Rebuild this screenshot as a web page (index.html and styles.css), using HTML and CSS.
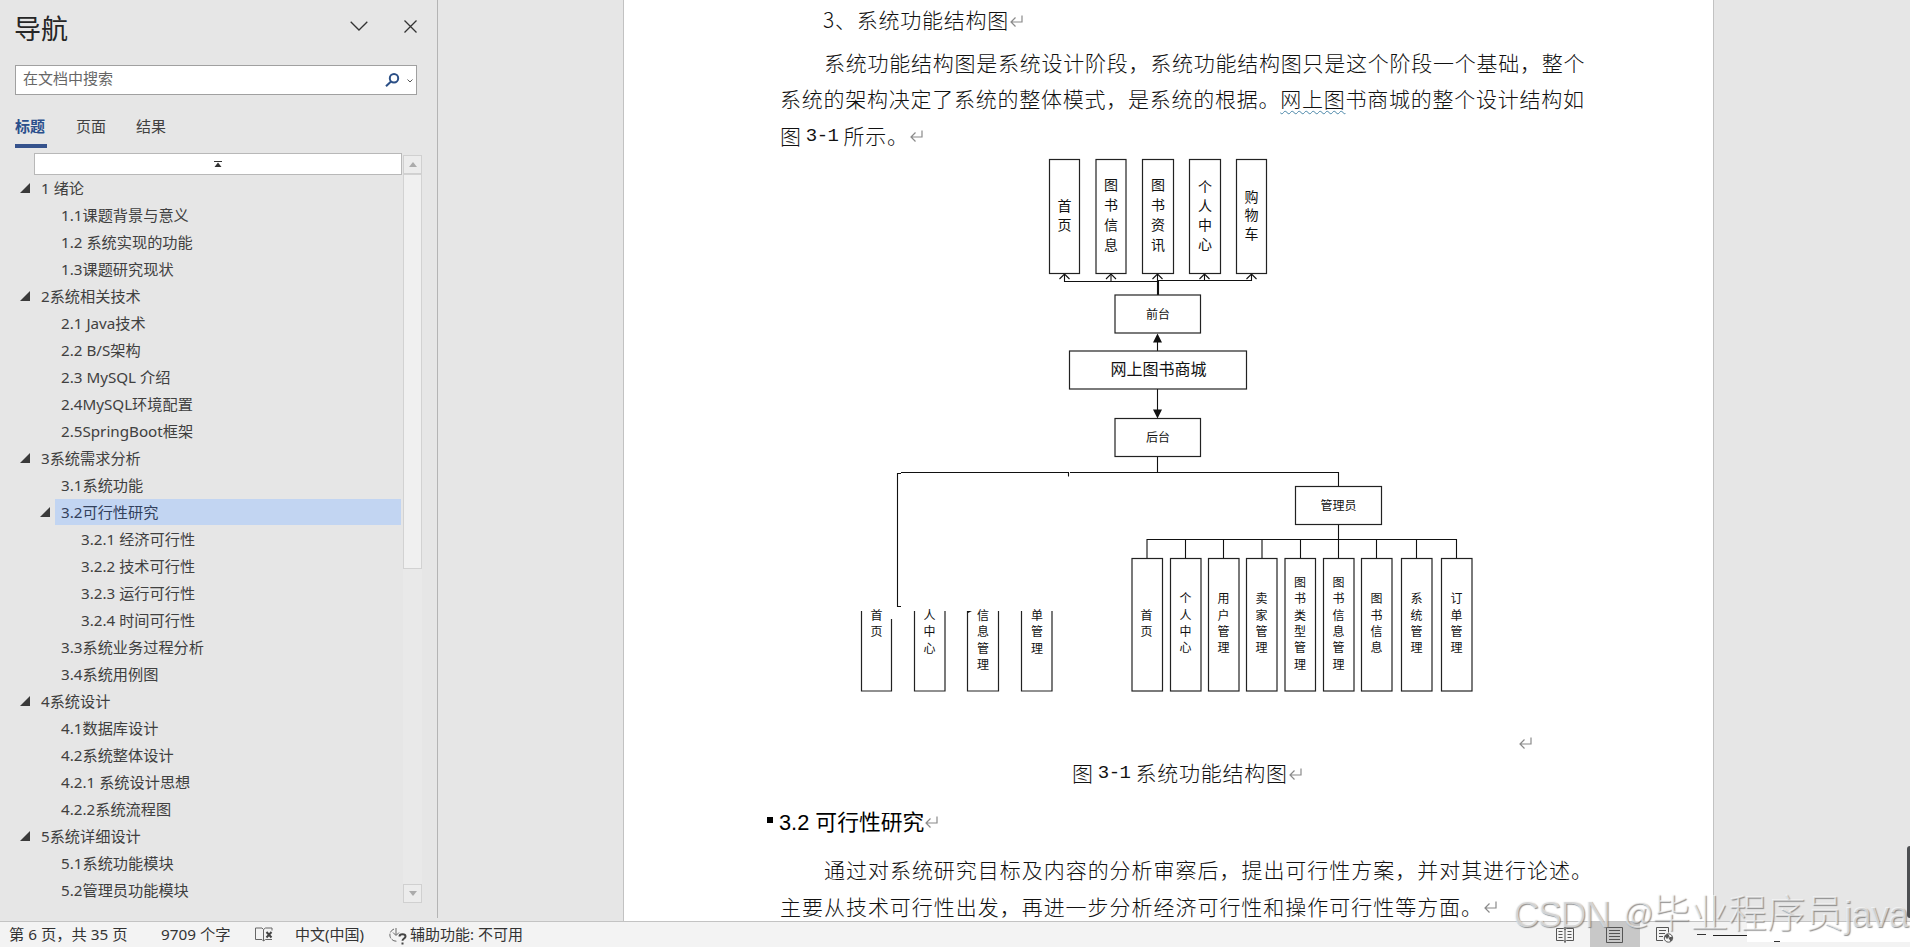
FILE: index.html
```html
<!DOCTYPE html>
<html lang="zh-CN">
<head>
  <meta charset="UTF-8">
  <title>导航</title>
  <link rel="stylesheet" href="styles.css">
</head>
<body>
  <svg class="defs">
    <symbol id="ret" viewBox="0 0 13 12">
      <path d="M12 0.5V7H1.5M5.5 2.5L1 7l4.5 4.5" fill="none" stroke="#8a8a8a" stroke-width="1.2"/>
    </symbol>
  </svg>

  <div class="main">
    <aside class="nav">
      <header class="nav-head">
        <h1>导航</h1>
        <svg class="ico-down" viewBox="0 0 18 10"><path d="M0.7 0.7L9 9l8.3-8.3"/></svg>
        <svg class="ico-close" viewBox="0 0 13 13"><path d="M0.5 0.5l12 12M12.5 0.5l-12 12"/></svg>
      </header>
      <div class="search">
        <span>在文档中搜索</span>
        <svg class="ico-search" viewBox="0 0 15 14"><circle cx="9" cy="5.3" r="4.2"/><path d="M6 8.5L1 13.3"/></svg>
        <svg class="ico-more" viewBox="0 0 6 4"><path d="M0.5 0.5L3 3l2.5-2.5"/></svg>
      </div>
      <div class="tabs">
        <span class="tab active">标题</span>
        <span class="tab">页面</span>
        <span class="tab">结果</span>
      </div>
      <div class="outline">
        <div class="tree">
          <div class="jump"><svg viewBox="0 0 8 6"><path d="M0 0h8v1H0zM4 1.5L7.5 6h-7z"/></svg></div>
          <div class="row l1 open">1 绪论</div>
          <div class="row l2">1.1课题背景与意义</div>
          <div class="row l2">1.2 系统实现的功能</div>
          <div class="row l2">1.3课题研究现状</div>
          <div class="row l1 open">2系统相关技术</div>
          <div class="row l2">2.1 Java技术</div>
          <div class="row l2">2.2 B/S架构</div>
          <div class="row l2">2.3 MySQL 介绍</div>
          <div class="row l2">2.4MySQL环境配置</div>
          <div class="row l2">2.5SpringBoot框架</div>
          <div class="row l1 open">3系统需求分析</div>
          <div class="row l2">3.1系统功能</div>
          <div class="row l2 open selected">3.2可行性研究</div>
          <div class="row l3">3.2.1 经济可行性</div>
          <div class="row l3">3.2.2 技术可行性</div>
          <div class="row l3">3.2.3 运行可行性</div>
          <div class="row l3">3.2.4 时间可行性</div>
          <div class="row l2">3.3系统业务过程分析</div>
          <div class="row l2">3.4系统用例图</div>
          <div class="row l1 open">4系统设计</div>
          <div class="row l2">4.1数据库设计</div>
          <div class="row l2">4.2系统整体设计</div>
          <div class="row l2">4.2.1 系统设计思想</div>
          <div class="row l2">4.2.2系统流程图</div>
          <div class="row l1 open">5系统详细设计</div>
          <div class="row l2">5.1系统功能模块</div>
          <div class="row l2">5.2管理员功能模块</div>
        </div>
        <div class="scroll">
          <div class="scroll-btn"><svg viewBox="0 0 8 5"><path d="M4 0l4 5H0z"/></svg></div>
          <div class="thumb"></div>
          <div class="scroll-btn end"><svg viewBox="0 0 8 5"><path d="M4 5l4-5H0z"/></svg></div>
        </div>
      </div>
    </aside>

    <main class="canvas">
      <article class="page">
        <div class="line title">3、系统功能结构图<svg class="ret"><use href="#ret"/></svg></div>
        <div class="line indent">系统功能结构图是系统设计阶段，系统功能结构图只是这个阶段一个基础，整个</div>
        <div class="line">系统的架构决定了系统的整体模式，是系统的根据。<span class="wavy">网上图</span>书商城的整个设计结构如</div>
        <div class="line">图<span class="num">3-1</span>所示。<svg class="ret"><use href="#ret"/></svg></div>

        <svg class="diagram" viewBox="850 155 640 570">
          <!-- connectors -->
          <g class="wire">
            <path d="M1064.5 275v6.5H1158M1111 275v6.5M1157.5 275v20M1158.5 281v14M1158 280.5h93.5V275M1204.5 275v5.5"/>
            <path d="M1059.5 279l5-5 5 5M1106 279l5-5 5 5M1152.5 279l5-5 5 5M1199.5 279l5-5 5 5M1246.5 279l5-5 5 5"/>
            <path d="M1157.5 351v-10M1157.5 389v22M1157.5 457v15.5"/>
            <path d="M901 606.5h-3.5V473.5h3.5M901 472.5h167.5v4M1070 472.5h268.5V486"/>
            <path d="M1338.5 525v14M1147 558v-18.5h309.5V558M1185.5 539v19M1223.5 539v19M1262 539v19M1300.5 539v19M1338.5 539v19M1376.5 539v19M1416.5 539v19"/>
          </g>
          <path d="M1157.5 333.5l4.5 9h-9zM1157.5 418.5l4.5-9h-9z"/>

          <g class="box">
            <rect x="1049.5" y="159.5" width="30" height="114"/>
            <rect x="1096" y="159.5" width="30" height="114"/>
            <rect x="1142.5" y="159.5" width="31" height="114"/>
            <rect x="1189.5" y="159.5" width="31" height="114"/>
            <rect x="1236.5" y="159.5" width="30" height="114"/>
            <rect x="1115" y="295" width="85.5" height="38"/>
            <rect x="1069.5" y="351" width="177" height="38"/>
            <rect x="1115" y="418.5" width="85.5" height="38"/>
            <rect x="1295.5" y="486.5" width="86" height="38"/>
            <rect x="1132" y="558.5" width="30.5" height="132.5"/>
            <rect x="1170.5" y="558.5" width="30.5" height="132.5"/>
            <rect x="1208.5" y="558.5" width="30.5" height="132.5"/>
            <rect x="1246.5" y="558.5" width="30.5" height="132.5"/>
            <rect x="1285" y="558.5" width="30.5" height="132.5"/>
            <rect x="1323.5" y="558.5" width="30.5" height="132.5"/>
            <rect x="1361.5" y="558.5" width="30.5" height="132.5"/>
            <rect x="1401.5" y="558.5" width="30.5" height="132.5"/>
            <rect x="1441.5" y="558.5" width="30.5" height="132.5"/>
            <path d="M861.5 611v80h30v-72M914.5 611v80h30.5v-80M967.5 611v80h31v-80M1021.5 611v80h30.5v-80"/>
          </g>
          <path d="M967 611h5l-4 2z"/>

          <g class="v big">
            <text x="1064.5" y="217.5">首页</text>
            <text class="loose" x="1111" y="217.5">图书信息</text>
            <text class="loose" x="1158" y="217.5">图书资讯</text>
            <text x="1205" y="217.5">个人中心</text>
            <text x="1251.5" y="217.5">购物车</text>
          </g>
          <g class="h">
            <text x="1158" y="313">前台</text>
            <text class="root" x="1158.5" y="368">网上图书商城</text>
            <text x="1158" y="436">后台</text>
            <text x="1338.5" y="504">管理员</text>
          </g>
          <g class="v">
            <text x="1146.5" y="625.5">首页</text>
            <text x="1185.5" y="625.5">个人中心</text>
            <text x="1223.5" y="625.5">用户管理</text>
            <text x="1261.5" y="625.5">卖家管理</text>
            <text x="1300" y="625.5">图书类型管理</text>
            <text x="1338.5" y="625.5">图书信息管理</text>
            <text x="1376.5" y="625.5">图书信息</text>
            <text x="1416.5" y="625.5">系统管理</text>
            <text x="1456.5" y="625.5">订单管理</text>
          </g>
          <g class="v cut">
            <text x="876.5" y="609.5">首页</text>
            <text x="929.5" y="609.5">人中心</text>
            <text x="983" y="609.5">信息管理</text>
            <text x="1037" y="609.5">单管理</text>
          </g>
        </svg>

        <div class="line lone"><svg class="ret"><use href="#ret"/></svg></div>
        <div class="line caption">图<span class="num">3-1</span>系统功能结构图<svg class="ret"><use href="#ret"/></svg></div>
        <h2 class="heading"><i class="bullet"></i>3.2 可行性研究<svg class="ret"><use href="#ret"/></svg></h2>
        <div class="line wide indent">通过对系统研究目标及内容的分析审察后，提出可行性方案，并对其进行论述。</div>
        <div class="line wide">主要从技术可行性出发，再进一步分析经济可行性和操作可行性等方面。<svg class="ret"><use href="#ret"/></svg></div>
      </article>
      <div class="side-handle"></div>
    </main>
  </div>

  <footer class="status">
    <span class="st-page">第 6 页，共 35 页</span>
    <span class="st-words">9709 个字</span>
    <svg class="st-book" viewBox="0 0 18 15"><path d="M8.5 2.5L7 1H0.5v11.5H7l1.5 1.5V2.5l2-1.5H17v2.5M8.5 14l2-1.500H17"/><path class="bold" d="M11.5 5l5 5.5M16.5 5l-5 5.5"/></svg>
    <span class="st-lang">中文(中国)</span>
    <svg class="st-acc" viewBox="0 0 19 18"><path d="M6 2A6.3 6.3 0 0 0 8.5 14.2" stroke-dasharray="5 1.2"/><path d="M8 1v7M5 5.5l3 3 3-3"/><path class="bold" d="M11.5 9.5c0-3 6-3 6 0 0 2-3 2-3 4.3M14.5 15.5v2"/></svg>
    <span class="st-access">辅助功能: 不可用</span>
    <div class="views">
      <div class="view"><svg viewBox="0 0 18 16"><path d="M0.5 1.5h7l1.5 1 1.5-1h7v12h-7l-1.5 1-1.5-1h-7zM9 0v16M2.5 4.5h4M2.5 7.5h4M2.5 10.5h4M11.5 4.5h4M11.5 7.5h4M11.5 10.5h4"/></svg></div>
      <div class="view on"><svg viewBox="0 0 18 16"><path d="M0.5 0.5h16v15h-16zM3 3.5h11M3 6.5h11M3 9.5h11M3 12.5h11"/></svg></div>
      <div class="view"><svg viewBox="0 0 18 16"><path d="M7 13.5H0.5v-13h12v5M3 3.5h7M3 6.5h6M3 9.5h4"/><circle cx="12.5" cy="11" r="4.2"/><path class="land" d="M9 9l3-1.5 1 2-2 2zM13 11l3-1-1 4z"/></svg></div>
    </div>
    <div class="zoom">
      <i class="minus"></i>
      <i class="track"></i>
      <div class="patch"><i></i></div>
    </div>
  </footer>

  <div class="watermark"><span class="wm-a">CSDN</span><span class="wm-b">@</span><span class="wm-c">毕业程序员</span><span class="wm-d">java</span></div>
</body>
</html>
```
FILE: styles.css
```css
* {
  box-sizing: border-box;
}
body {
  margin: 0;
  width: 1910px;
  height: 947px;
  overflow: hidden;
  position: relative;
  display: flex;
  flex-direction: column;
  background: #e6e6e6;
  color: #404040;
  font-family: "Noto Sans", "Noto Sans CJK SC", sans-serif;
  font-size: 15px;
}
svg {
  display: block;
  flex: none;
}
.defs {
  display: none;
}
.main {
  display: flex;
  height: 921px;
  overflow: hidden;
}

/* navigation pane */
.nav {
  width: 438px;
  height: 918px;
  border-right: 1px solid #b4b4b4;
  flex: none;
}
.nav-head {
  display: flex;
  align-items: center;
  height: 65px;
  padding: 0 20px 13px 14px;
}
.nav-head h1 {
  flex: 1;
  margin: 5px 0 0;
  font-size: 27px;
  font-weight: 400;
  line-height: 40px;
  color: #262626;
}
.nav-head svg {
  fill: none;
  stroke: #333;
  stroke-width: 1.3;
}
.ico-down {
  width: 18px;
  height: 10px;
  margin-right: 36px;
}
.ico-close {
  width: 13px;
  height: 13px;
}
.search {
  display: flex;
  align-items: center;
  width: 402px;
  height: 30px;
  margin-left: 15px;
  padding: 0 3px 0 7px;
  background: #fff;
  border: 1px solid #a0a0a0;
}
.search span {
  flex: 1;
  line-height: 26px;
  margin-top: -4px;
  color: #666;
}
.ico-search {
  width: 15px;
  height: 14px;
  margin-top: -1px;
  fill: none;
  stroke: #2b4f86;
  stroke-width: 2;
}
.ico-more {
  width: 6px;
  height: 4px;
  margin: 1px 0 0 7px;
  fill: none;
  stroke: #555;
}
.tabs {
  display: flex;
  gap: 28px;
  height: 58px;
  padding: 16px 0 0 15px;
}
.tab {
  width: 32px;
  height: 37px;
  padding-left: 1px;
  line-height: 31px;
  white-space: nowrap;
}
.tab.active {
  padding-left: 0;
  color: #2b4f8c;
  font-weight: 700;
  border-bottom: 4px solid #35528c;
}
.outline {
  display: flex;
}
.tree {
  width: 402px;
}
.jump {
  display: flex;
  align-items: center;
  justify-content: center;
  height: 22px;
  margin-left: 34px;
  background: #fff;
  border: 1px solid #b8b8b8;
}
.jump svg {
  width: 8px;
  height: 6px;
  fill: #333;
}
.row {
  height: 27px;
  line-height: 26px;
  font-size: 15.2px;
  white-space: nowrap;
}
.l1 {
  padding-left: 41px;
}
.l2 {
  margin-left: 55px;
  padding-left: 6px;
}
.l3 {
  padding-left: 81px;
}
.open::before {
  content: "";
  float: left;
  width: 10px;
  height: 10px;
  margin: 8px 0 0 -21px;
  background: #3a3a3a;
  clip-path: polygon(100% 0, 100% 100%, 0 100%);
}
.selected {
  height: 26px;
  margin-right: 1px;
  margin-bottom: 1px;
  background: #c2d5f2;
  color: #33415c;
}
.scroll {
  display: flex;
  flex-direction: column;
  width: 19px;
  height: 748px;
  margin: 2px 0 0 1px;
  background: #e9e9e9;
}
.scroll-btn {
  display: flex;
  align-items: center;
  justify-content: center;
  height: 19px;
  border: 1px solid #d0d0d0;
  background: #ececec;
}
.scroll-btn.end {
  margin-top: auto;
}
.scroll-btn svg {
  width: 8px;
  height: 5px;
  fill: #ababab;
}
.thumb {
  height: 395px;
  background: #f0f0f0;
  border: 1px solid #d2d2d2;
}

/* document */
.canvas {
  flex: 1;
  position: relative;
}
.page {
  width: 1091px;
  height: 921px;
  margin-left: 185px;
  padding: 1px 0 0 156px;
  background: #fff;
  border-left: 1px solid #c2c2c2;
  border-right: 1px solid #c2c2c2;
  color: #111;
  overflow: hidden;
}
.line {
  display: flex;
  align-items: center;
  height: 36.5px;
  font-family: "Noto Sans CJK SC", sans-serif;
  font-weight: 300;
  font-size: 21px;
  letter-spacing: 0.75px;
  white-space: nowrap;
}
.line.indent {
  padding-left: 44px;
}
.line.wide {
  height: 37px;
  letter-spacing: 0.97px;
}
.line.title {
  margin-bottom: 6px;
  padding-left: 43px;
}
.num {
  margin: 2px 5px 0 4px;
  font-family: "Liberation Mono", monospace;
  font-size: 19px;
  letter-spacing: -0.5px;
}
.wavy {
  text-decoration: underline wavy #4a86a8 1px;
  text-underline-offset: 3px;
}
.ret {
  width: 13px;
  height: 12px;
  margin: 3px 0 0 1px;
}
.diagram {
  width: 640px;
  height: 570px;
  margin: 2px 0 -2px 70px;
  font-family: "Noto Sans CJK SC", sans-serif;
  font-size: 12px;
  fill: #111;
}
.wire {
  fill: none;
  stroke: #111;
  stroke-width: 1.1;
}
.box {
  fill: none;
  stroke: #222;
  stroke-width: 1.2;
}
.v text {
  writing-mode: vertical-rl;
  text-anchor: middle;
  letter-spacing: 4.3px;
}
.v.big text {
  font-size: 14px;
  letter-spacing: 4.7px;
}
.v.big .loose {
  letter-spacing: 6px;
}
.v.cut text {
  text-anchor: start;
}
.h text {
  text-anchor: middle;
  dominant-baseline: central;
}
.h .root {
  font-size: 16px;
}
.line.lone {
  height: 36px;
  padding-left: 738px;
}
.line.caption {
  height: 26px;
  padding-left: 292px;
}
.heading {
  display: flex;
  align-items: center;
  height: 64px;
  margin: 3px 0 -2px -13px;
  font-family: "Liberation Sans", "Noto Sans CJK SC", sans-serif;
  font-size: 21.8px;
  font-weight: 400;
  color: #000;
  white-space: pre;
}
.bullet {
  width: 6px;
  height: 6px;
  margin: 0 6px 1px 0;
  background: #000;
}
.side-handle {
  position: absolute;
  right: 0;
  top: 846px;
  width: 3px;
  height: 72px;
  background: #4d4f52;
  border-radius: 3px 0 0 3px;
}

/* status bar */
.status {
  display: flex;
  align-items: center;
  height: 26px;
  padding-left: 9px;
  background: #f3f3f3;
  border-top: 1px solid #c3c3c3;
  color: #333;
  white-space: nowrap;
}
.status span {
  line-height: 24px;
  padding-bottom: 1px;
}
.status svg {
  fill: none;
  stroke: #666;
}
.status .bold {
  stroke-width: 2;
  stroke: #444;
}
.st-page {
  width: 152px;
  font-size: 15.3px;
}
.st-words {
  width: 94px;
  font-size: 15.3px;
}
.st-book {
  width: 18px;
  height: 15px;
}
.st-lang {
  width: 93px;
  margin-left: 22px;
}
.st-acc {
  width: 19px;
  height: 18px;
  margin: 3px 3px 0 0;
}
.views {
  display: flex;
  margin-left: auto;
}
.view {
  display: flex;
  align-items: center;
  justify-content: center;
  width: 50px;
  height: 25px;
}
.view.on {
  background: #c8c8c8;
}
.view svg {
  width: 18px;
  height: 16px;
  stroke: #555;
}
.view .land {
  fill: #555;
}
.zoom {
  display: flex;
  align-items: center;
  width: 220px;
  height: 25px;
  padding-left: 7px;
}
.minus {
  width: 9px;
  height: 1px;
  background: #333;
}
.track {
  width: 34px;
  height: 1px;
  margin: 2px 0 0 7px;
  background: #222;
}
.patch {
  width: 163px;
  height: 20px;
  margin-bottom: 5px;
  padding: 19px 0 0 27px;
  background: #fff;
}
.patch i {
  display: block;
  width: 6px;
  height: 1px;
  background: #333;
}

.watermark {
  position: absolute;
  left: 1513px;
  top: 889px;
  display: flex;
  align-items: baseline;
  height: 50px;
  line-height: 50px;
  font-family: "Liberation Sans", "Noto Sans CJK SC", sans-serif;
  font-size: 36px;
  font-weight: 300;
  color: rgba(255, 255, 255, 0.6);
  text-shadow: 1px 1px 1px rgba(110, 110, 110, 0.75);
  white-space: nowrap;
}
.wm-a {
  width: 110px;
  letter-spacing: -1.5px;
}
.wm-b {
  width: 29px;
  font-size: 30px;
  position: relative;
  top: -3px;
}
.wm-c {
  width: 192px;
  font-size: 38.3px;
}
.wm-d {
  letter-spacing: -0.5px;
}
```
